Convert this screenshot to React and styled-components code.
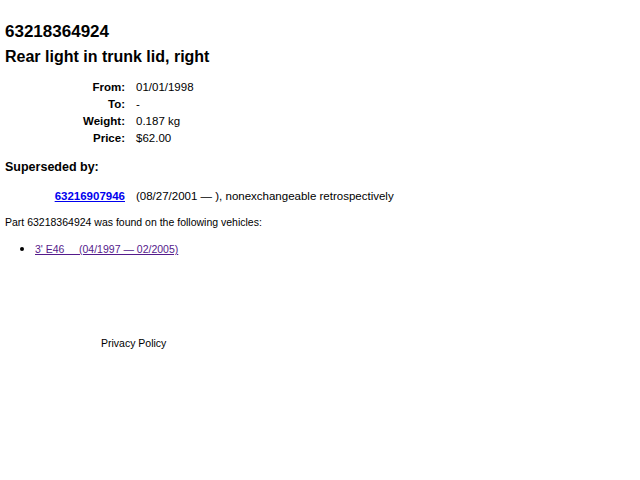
import styled, { createGlobalStyle } from "styled-components";

const Global = createGlobalStyle`
  html, body {
    margin: 0;
    padding: 0;
    background: #fff;
  }
  body {
    font-family: "Liberation Sans", Arial, Helvetica, sans-serif;
    color: #000;
  }
`

const Page = styled.div`
    display: flex;
    flex-direction: column;
    padding: 22px 5px 0 5px;
`
const PartNumber = styled.h1`
    margin: 0;
    font-size: 17px;
    line-height: 20px;
    font-weight: bold;
`
const PartName = styled.h2`
    margin: 5px 0 0 0;
    font-size: 16px;
    line-height: 20px;
    font-weight: bold;
`
const Specs = styled.div`
    display: grid;
    grid-template-columns: 120px auto;
    column-gap: 11px;
    margin-top: ${p => p.$top || 0}px;
    font-size: 11.5px;
    line-height: 17px;
`
const Label = styled.span`
    text-align: right;
    font-weight: bold;
`
const Value = styled.span``

const Heading = styled.h3`
    margin: 12px 0 0 0;
    font-size: 12.5px;
    line-height: 17px;
    font-weight: bold;
`
const PartLink = styled.a`
    text-align: right;
    font-weight: bold;
    color: #0000ee;
    text-decoration: underline;
`
const Note = styled.p`
    margin: 10px 0 0 0;
    font-size: 10.5px;
    line-height: 14px;
`
const Vehicles = styled.ul`
    margin: 12px 0 0 0;
    padding-left: 30px;
    font-size: 10.5px;
    line-height: 14px;
`
const Vehicle = styled.li`
    &::marker {
        font-size: 14px;
    }
`
const VehicleLink = styled.a`
    color: #551a8b;
    text-decoration: underline;
    white-space: pre;
`
const Footer = styled.footer`
    margin-top: 80px;
    padding-left: 96px;
    font-size: 10.5px;
    line-height: 14px;
`

const specs = [
    ["From:", "01/01/1998"],
    ["To:", "-"],
    ["Weight:", "0.187 kg"],
    ["Price:", "$62.00"],
]

const App = () => {
    return (
        <>
            <Global />
            <Page>
                <PartNumber>63218364924</PartNumber>
                <PartName>Rear light in trunk lid, right</PartName>
                <Specs $top={12}>
                    {specs.map(([label, value]) => [
                        <Label key={label}>{label}</Label>,
                        <Value key={label + "v"}>{value}</Value>,
                    ])}
                </Specs>
                <Heading>Superseded by:</Heading>
                <Specs $top={12}>
                    <PartLink href="#">63216907946</PartLink>
                    <Value>(08/27/2001 — ), nonexchangeable retrospectively</Value>
                </Specs>
                <Note>Part 63218364924 was found on the following vehicles:</Note>
                <Vehicles>
                    <Vehicle><VehicleLink href="#">{"3' E46     (04/1997 — 02/2005)"}</VehicleLink></Vehicle>
                </Vehicles>
                <Footer>Privacy Policy</Footer>
            </Page>
        </>
    );
}

export default App;
